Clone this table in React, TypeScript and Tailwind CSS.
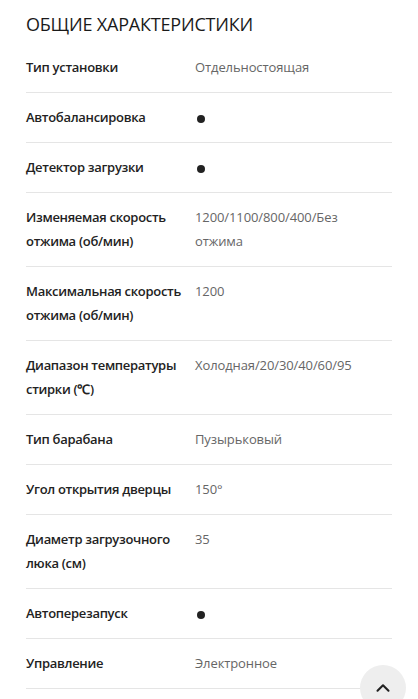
import { ChevronUp } from "lucide-react";

const rows: { label: string; value: string }[] = [
  { label: "Тип установки", value: "Отдельностоящая" },
  { label: "Автобалансировка", value: "●" },
  { label: "Детектор загрузки", value: "●" },
  { label: "Изменяемая скорость отжима (об/мин)", value: "1200/1100/800/400/Без отжима" },
  { label: "Максимальная скорость отжима (об/мин)", value: "1200" },
  { label: "Диапазон температуры стирки (℃)", value: "Холодная/20/30/40/60/95" },
  { label: "Тип барабана", value: "Пузырьковый" },
  { label: "Угол открытия дверцы", value: "150°" },
  { label: "Диаметр загрузочного люка (см)", value: "35" },
  { label: "Автоперезапуск", value: "●" },
  { label: "Управление", value: "Электронное" },
];

export default function App() {
  return (
    <div className="min-h-screen bg-white px-[26px] font-['Open_Sans',sans-serif] text-[#222]">
      <h2 className="pt-[11px] pb-[6px] text-[18px] leading-[26px] font-normal tracking-[-0.2px] text-[#1a1a1a]">
        ОБЩИЕ ХАРАКТЕРИСТИКИ
      </h2>
      <div>
        {rows.map((r, i) => (
          <div
            key={i}
            className="flex border-b border-[#e5e5e5] pt-[12px] pb-[13px] leading-[24px]"
          >
            <div className="w-[169px] shrink-0 pr-1 text-[13px] font-semibold tracking-[-0.3px] text-[#222]">{r.label}</div>
            <div className="flex-1 text-[13px] font-normal tracking-[-0.1px] text-[#666]">
              {r.value === "●" ? (
                <span className="inline-block h-[8px] w-[8px] rounded-full bg-[#222] align-middle ml-[2px]" />
              ) : (
                <div className="max-w-[170px]">{r.value}</div>
              )}
            </div>
          </div>
        ))}
      </div>
      <button className="fixed left-[360px] top-[665px] flex h-[46px] w-[46px] items-center justify-center rounded-full bg-[#eeeeee]">
        <ChevronUp size={22} strokeWidth={2.25} className="text-[#222]" />
      </button>
    </div>
  );
}
